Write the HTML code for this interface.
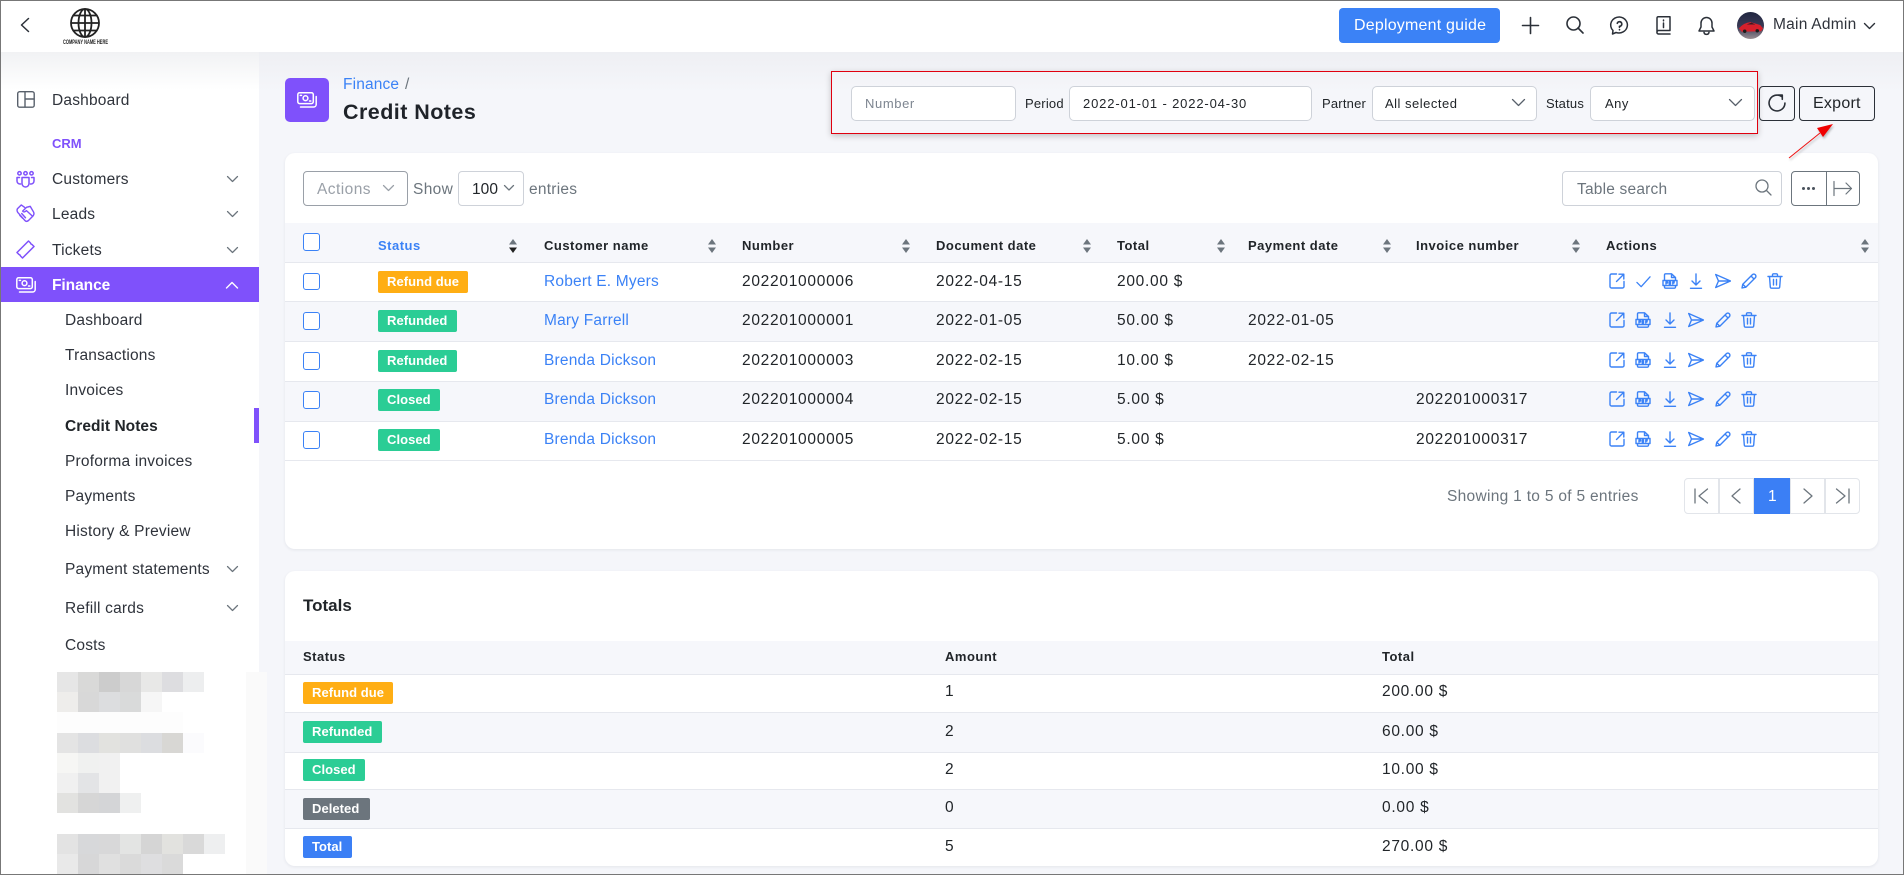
<!DOCTYPE html>
<html lang="en"><head><meta charset="utf-8"><title>Credit Notes</title>
<style>
*{box-sizing:border-box}
html,body{margin:0;padding:0}
body{width:1904px;height:875px;position:relative;overflow:hidden;background:#f5f6fa;font-family:"Liberation Sans",sans-serif;font-size:15.5px;color:#212529}
.a,.t,.b,svg.i{position:absolute}
.t{white-space:nowrap;line-height:20px;height:20px;letter-spacing:.2px;margin-top:2px}
.n{letter-spacing:.72px}
.h{font-size:13px;font-weight:700;letter-spacing:.5px;color:#212529;margin-top:0}
.l{color:#3b82f6}
.s{color:#2f333b}
.f{font-size:13px;letter-spacing:.2px;margin-top:1px}
.b{height:22px;line-height:22px;border-radius:2px;color:#fff;font-size:13px;font-weight:700;padding-left:9px;letter-spacing:.05px;white-space:nowrap}
.or{background:#ffae14}.gr{background:#2bcd95}.gy{background:#6c757d}.bl{background:#3b7ff5}
.inp{position:absolute;top:86px;height:35px;background:#fff;border:1px solid #ced2d9;border-radius:5px}
.row{position:absolute;left:285px;width:1593px;border-bottom:1px solid #e6e8ee}
.tint{background:#f6f7fb}
.so{position:absolute;width:8px;height:14px}
svg{overflow:visible}
svg.i{fill:none;stroke:#3b82f6;stroke-width:1.4;stroke-linecap:round;stroke-linejoin:round}
.pg{position:absolute;top:478px;width:35px;height:36px;border:1px solid #e2e5ea;background:#fff}
</style></head><body>
<svg width="0" height="0" style="position:absolute">
<defs>
<symbol id="ext" viewBox="0 0 16 16"><path d="M7.5 1H2.500A1.500 1.500 0 0 0 1 2.500V13.500A1.500 1.500 0 0 0 2.500 15H13.500A1.500 1.500 0 0 0 15 13.500V8.500M7.500 8.500L14.500 1.500M10 1.200H14.800V6"/></symbol>
<symbol id="chk" viewBox="0 0 16 16"><path d="M1 9L5.500 13.500L15 3"/></symbol>
<symbol id="pdf" viewBox="0 0 16 16"><path d="M2.500 7V2A1.200 1.200 0 0 1 3.700 .8H9.500L13.500 4.500V7M9.500 .8V4.500H13.500M1 7.500H15V12.500H1ZM2.500 12.500V14A1.200 1.200 0 0 0 3.700 15.200H12.300A1.200 1.200 0 0 0 13.500 14V12.500M4 9V11M4 9H5.500V10H4M7.200 9V11H8.500V9ZM10.800 9V11M10.800 9H12.300M10.800 10H12"/></symbol>
<symbol id="dl" viewBox="0 0 16 16"><path d="M8 1V12M4 8L8 12L12 8M2.500 15.300H13.500"/></symbol>
<symbol id="snd" viewBox="0 0 16 16"><path d="M.7 1.500L15.500 8L.7 14.500L3.500 8ZM3.500 8H15.500"/></symbol>
<symbol id="pen" viewBox="0 0 16 16"><path d="M1 15L1.800 11.200L11.300 1.700A1.800 1.800 0 0 1 14.300 4.700L4.800 14.200ZM10 3L13 6M1.800 11.200L4.800 14.200"/></symbol>
<symbol id="tr" viewBox="0 0 16 16"><path d="M1 3.500H15M5.500 3.500V1.800A1 1 0 0 1 6.500 .8H9.500A1 1 0 0 1 10.500 1.800V3.500M2.500 3.500L3.300 14A1.300 1.300 0 0 0 4.600 15.200H11.400A1.300 1.300 0 0 0 12.700 14L13.500 3.500M6.500 6.500V12M9.500 6.500V12"/></symbol>
<symbol id="cash" viewBox="0 0 20 16"><rect x=".8" y=".8" width="15.500" height="10.800" rx="1.800"/><circle cx="8.500" cy="6.200" r="2.400"/><path d="M3.300 3.400H4.500M12.500 9H13.800M19.200 4.500V12.500A2.500 2.500 0 0 1 16.700 15H3.500"/></symbol>
</defs></svg>

<!-- sidebar -->
<div class="a" style="left:0;top:52px;width:259px;height:823px;background:#fff"></div>
<div class="a" style="left:0;top:52px;width:259px;height:38px;background:linear-gradient(#f1f2f4,#fff)"></div>
<div class="a" style="left:259px;top:52px;width:1645px;height:40px;background:linear-gradient(#eeeff3,#f5f6fa)"></div>

<!-- header -->
<div class="a" style="left:0;top:0;width:1904px;height:52px;background:#fff"></div>
<svg class="i" style="left:20px;top:18px;stroke:#2b3038;stroke-width:1.500" width="10" height="14" viewBox="0 0 10 14"><path d="M8.500 .5L1.500 7L8.500 13.500"/></svg>
<svg class="a" style="left:70px;top:8px" width="30" height="30" viewBox="0 0 30 30" fill="none" stroke="#222" stroke-width="1.800"><circle cx="15" cy="15" r="14"/><ellipse cx="15" cy="15" rx="6.500" ry="14"/><path d="M15 1V29M1 15H29M3.500 7.500H26.500M3.500 22.500H26.500"/></svg>
<svg class="a" style="left:63px;top:38px" width="45" height="7"><text x="0" y="6" font-family="Liberation Sans" font-size="6" font-weight="700" fill="#222" textLength="45" lengthAdjust="spacingAndGlyphs">COMPANY NAME HERE</text></svg>

<div class="a" style="left:1339px;top:8px;width:161px;height:35px;border-radius:4px;background:#3b82f6"></div>
<div class="t" style="left:1354px;top:15px;color:#fff;font-size:16px;letter-spacing:.2px;margin-top:1px">Deployment guide</div>
<svg class="i" style="left:1522px;top:17px;stroke:#2b3038;stroke-width:1.600" width="17" height="17"><path d="M8.500 .5V16.500M.5 8.500H16.500"/></svg>
<svg class="i" style="left:1566px;top:16px;stroke:#2b3038;stroke-width:1.600" width="17" height="17"><circle cx="7.500" cy="7.500" r="6.500"/><path d="M12 12L17 17"/></svg>
<svg class="i" style="left:1610px;top:16px;stroke:#2b3038;stroke-width:1.500" width="19" height="19" viewBox="0 0 19 19"><path d="M9.500 1A8.500 8 0 1 1 6 16.500L2.500 18L3 14.500A8.500 8 0 0 1 9.500 1Z"/><path d="M7.300 7.300A2.300 2.300 0 1 1 9.500 10.300V11.300M9.500 13.600V13.800" stroke-width="1.700"/></svg>
<svg class="i" style="left:1656px;top:16px;stroke:#2b3038;stroke-width:1.500" width="15" height="19" viewBox="0 0 15 19"><path d="M1 16V2A1.300 1.300 0 0 1 2.300 .8H14V14.500H2.300A1.800 1.800 0 0 0 2.300 18H14M7.500 4V4.800M7.500 7V11.500" /></svg>
<svg class="i" style="left:1698px;top:16px;stroke:#2b3038;stroke-width:1.500" width="17" height="20" viewBox="0 0 17 20"><path d="M8.500 1.500A5.500 5.500 0 0 0 3 7V11L1 15H16L14 11V7A5.500 5.500 0 0 0 8.500 1.500ZM6 16.500A2.600 2.600 0 0 0 11 16.500"/></svg>
<svg class="a" style="left:1737px;top:12px" width="27" height="27" viewBox="0 0 28 28"><defs><clipPath id="cc"><circle cx="14" cy="14" r="14"/></clipPath><linearGradient id="ag" x1="0" y1="0" x2="0" y2="1"><stop offset="0" stop-color="#202640"/><stop offset=".55" stop-color="#3a3a55"/><stop offset="1" stop-color="#9a8e92"/></linearGradient></defs><g clip-path="url(#cc)"><rect width="28" height="28" fill="url(#ag)"/><path d="M2 17Q7 11 14 10.500L24 13.500L27 17L25 20L5 20.500Z" fill="#d6202c"/><path d="M10 13L15 11L19 13Z" fill="#3a1a22"/><circle cx="8" cy="20" r="1.800" fill="#1a1a1a"/><circle cx="21" cy="19.500" r="1.800" fill="#1a1a1a"/></g></svg>
<div class="t s" style="left:1773px;top:15px;letter-spacing:.25px;margin-top:0">Main Admin</div>
<svg class="i" style="left:1864px;top:23px;stroke:#2b3038" width="11" height="7"><path d="M.5 .5L5.500 5.500L10.500 .5"/></svg>

<!-- sidebar items -->
<svg class="i" style="left:17px;top:91px;stroke:#58606b" width="18" height="17" viewBox="0 0 18 17"><rect x=".7" y=".7" width="16.500" height="15.500" rx="2"/><path d="M8 .7V16M8 8H17"/></svg>
<div class="t s" style="left:52px;top:89px">Dashboard</div>
<div class="t" style="left:52px;top:134px;font-size:13px;font-weight:700;letter-spacing:0;color:#7f51fb;margin-top:0">CRM</div>
<svg class="i" style="left:16px;top:171px;stroke:#7f51fb;stroke-width:1.500" width="19" height="17" viewBox="0 0 19 17"><circle cx="3.500" cy="2.300" r="1.700"/><circle cx="9.500" cy="2.300" r="1.700"/><circle cx="15.500" cy="2.300" r="1.700"/><path d="M6 6.500H13V12.500A3.500 3.500 0 0 1 6 12.500ZM3.500 6.500H1V10A3 3 0 0 0 4.500 13M15.500 6.500H18V10A3 3 0 0 1 14.500 13"/></svg>
<div class="t s" style="left:52px;top:168px">Customers</div>
<svg class="i" style="left:16px;top:204px;stroke:#7f51fb;stroke-width:1.500" width="19" height="19" viewBox="0 0 20 20"><path d="M9 3.500L5.500 1L1.500 5Q.5 7 2 9L9.500 17.500Q11 19 13 17.500L18 12.500Q19.500 10.500 18.500 8.500L15 2.500L11 3.500L7 7.500Q8.500 9.500 11 7L17 12.500M4 12L7 15M6 10L10 14.500"/></svg>
<div class="t s" style="left:52px;top:203px">Leads</div>
<svg class="i" style="left:16px;top:240px;stroke:#7f51fb;stroke-width:1.500" width="19" height="19" viewBox="0 0 19 19"><path d="M1 12.500L12.500 1L14.500 3A2 2 0 0 0 16 4.500L18 6.500L6.500 18L4.500 16A2 2 0 0 0 3 14.500Z"/></svg>
<div class="t s" style="left:52px;top:239px">Tickets</div>
<svg class="i" style="left:227px;top:176px;stroke:#6c757d;stroke-width:1.250" width="11" height="6"><path d="M.5 .5L5.500 5.500L10.500 .5"/></svg>
<svg class="i" style="left:227px;top:211px;stroke:#6c757d;stroke-width:1.250" width="11" height="6"><path d="M.5 .5L5.500 5.500L10.500 .5"/></svg>
<svg class="i" style="left:227px;top:247px;stroke:#6c757d;stroke-width:1.250" width="11" height="6"><path d="M.5 .5L5.500 5.500L10.500 .5"/></svg>

<div class="a" style="left:1px;top:267px;width:258px;height:35px;background:#7f51fb"></div>
<svg class="i" style="left:16px;top:277px;stroke:#fff;stroke-width:1.500" width="20" height="16"><use href="#cash"/></svg>
<div class="t" style="left:52px;top:274px;color:#fff;font-weight:700;letter-spacing:-.05px">Finance</div>
<svg class="i" style="left:226px;top:282px;stroke:#fff" width="12" height="7"><path d="M.5 6L6 .5L11.500 6"/></svg>

<div class="t s" style="left:65px;top:309px">Dashboard</div>
<div class="t s" style="left:65px;top:344px">Transactions</div>
<div class="t s" style="left:65px;top:379px">Invoices</div>
<div class="t" style="left:65px;top:415px;font-weight:700;letter-spacing:.05px">Credit Notes</div>
<div class="a" style="left:254px;top:408px;width:5px;height:35px;background:#7f51fb"></div>
<div class="t s" style="left:65px;top:450px">Proforma invoices</div>
<div class="t s" style="left:65px;top:485px">Payments</div>
<div class="t s" style="left:65px;top:520px">History &amp; Preview</div>
<div class="t s" style="left:65px;top:558px">Payment statements</div>
<svg class="i" style="left:227px;top:566px;stroke:#6c757d;stroke-width:1.250" width="11" height="6"><path d="M.5 .5L5.500 5.500L10.500 .5"/></svg>
<div class="t s" style="left:65px;top:597px">Refill cards</div>
<svg class="i" style="left:227px;top:605px;stroke:#6c757d;stroke-width:1.250" width="11" height="6"><path d="M.5 .5L5.500 5.500L10.500 .5"/></svg>
<div class="t s" style="left:65px;top:634px">Costs</div>

<!-- pixelated block -->
<div class="a" style="left:246px;top:672px;width:21px;height:203px;background:#fafafa"></div>
<svg class="a" style="left:57px;top:672px" width="168" height="203" shape-rendering="crispEdges">
<g><rect x="0" y="0" width="21" height="20" fill="#e6e6e6"/><rect x="21" y="0" width="21" height="20" fill="#d9d9d8"/><rect x="42" y="0" width="21" height="20" fill="#cccccc"/><rect x="63" y="0" width="21" height="20" fill="#d7d7d7"/><rect x="84" y="0" width="21" height="20" fill="#e8e8e7"/><rect x="105" y="0" width="21" height="20" fill="#dddde0"/><rect x="126" y="0" width="21" height="20" fill="#edeeef"/>
<rect x="0" y="20" width="21" height="20" fill="#eeedeb"/><rect x="21" y="20" width="21" height="20" fill="#d8d8d8"/><rect x="42" y="20" width="21" height="20" fill="#dcdddf"/><rect x="63" y="20" width="21" height="20" fill="#d9dada"/><rect x="84" y="20" width="21" height="20" fill="#f6f6f6"/>
<rect x="0" y="40" width="126" height="21" fill="#fdfdfd"/>
<rect x="0" y="61" width="21" height="20" fill="#e4e4e4"/><rect x="21" y="61" width="21" height="20" fill="#dcdde0"/><rect x="42" y="61" width="21" height="20" fill="#e2e2df"/><rect x="63" y="61" width="21" height="20" fill="#e0e0df"/><rect x="84" y="61" width="21" height="20" fill="#dcdde0"/><rect x="105" y="61" width="21" height="20" fill="#d8d7d4"/><rect x="126" y="61" width="21" height="20" fill="#fbfbfd"/>
<rect x="0" y="81" width="21" height="20" fill="#f6f6f4"/><rect x="21" y="81" width="21" height="20" fill="#f0f1f0"/><rect x="42" y="81" width="21" height="20" fill="#f1f1f1"/>
<rect x="0" y="101" width="21" height="20" fill="#f0f0f0"/><rect x="21" y="101" width="21" height="20" fill="#e3e4e6"/><rect x="42" y="101" width="21" height="20" fill="#f1f1f1"/>
<rect x="0" y="121" width="21" height="20" fill="#e2e2e0"/><rect x="21" y="121" width="21" height="20" fill="#d6d6d6"/><rect x="42" y="121" width="21" height="20" fill="#d4d5d7"/><rect x="63" y="121" width="21" height="20" fill="#eff0f0"/>
<rect x="0" y="162" width="21" height="20" fill="#e3e3e3"/><rect x="21" y="162" width="21" height="20" fill="#d7d8da"/><rect x="42" y="162" width="21" height="20" fill="#d8d8d9"/><rect x="63" y="162" width="21" height="20" fill="#e3e4e3"/><rect x="84" y="162" width="21" height="20" fill="#d5d5d5"/><rect x="105" y="162" width="21" height="20" fill="#e2e2df"/><rect x="126" y="162" width="21" height="20" fill="#d9d9d9"/><rect x="147" y="162" width="21" height="20" fill="#eeeff0"/>
<rect x="0" y="182" width="21" height="20" fill="#e9e9e9"/><rect x="21" y="182" width="21" height="20" fill="#d7d7d8"/><rect x="42" y="182" width="21" height="20" fill="#e0e0e0"/><rect x="63" y="182" width="21" height="20" fill="#dadada"/><rect x="84" y="182" width="21" height="20" fill="#dedee0"/><rect x="105" y="182" width="21" height="20" fill="#dadada"/></g></svg>

<!-- page title -->
<div class="a" style="left:285px;top:78px;width:44px;height:44px;border-radius:5px;background:#7f51fb"></div>
<svg class="i" style="left:297px;top:92px;stroke:#fff;stroke-width:1.500" width="20" height="16"><use href="#cash"/></svg>
<div class="t l" style="left:343px;top:75px;letter-spacing:.15px;margin-top:0">Finance</div>
<div class="t" style="left:405px;top:75px;color:#6c757d;margin-top:0">/</div>
<div class="t" style="left:343px;top:99px;height:24px;line-height:24px;font-size:21.5px;font-weight:700;letter-spacing:.45px;color:#1f2329;margin-top:1px">Credit Notes</div>

<!-- filter -->
<div class="a" style="left:831px;top:71px;width:927px;height:63px;border:1.500px solid #e0000f;box-shadow:0 2px 6px rgba(0,0,0,.22)"></div>
<div class="inp" style="left:851px;width:165px"></div>
<div class="t f" style="left:865px;top:93px;color:#7d8590;letter-spacing:.6px">Number</div>
<div class="t f" style="left:1025px;top:93px">Period</div>
<div class="inp" style="left:1069px;width:243px"></div>
<div class="t f" style="left:1083px;top:93px;letter-spacing:.85px">2022-01-01 - 2022-04-30</div>
<div class="t f" style="left:1322px;top:93px">Partner</div>
<div class="inp" style="left:1372px;width:165px"></div>
<div class="t f" style="left:1385px;top:93px;letter-spacing:.5px">All selected</div>
<svg class="i" style="left:1512px;top:99px;stroke:#58606b;stroke-width:1.250" width="13" height="7"><path d="M.5 .5L6.500 6.500L12.500 .5"/></svg>
<div class="t f" style="left:1546px;top:93px">Status</div>
<div class="inp" style="left:1590px;width:165px"></div>
<div class="t f" style="left:1605px;top:93px;letter-spacing:.5px">Any</div>
<svg class="i" style="left:1729px;top:99px;stroke:#58606b;stroke-width:1.250" width="13" height="7"><path d="M.5 .5L6.500 6.500L12.500 .5"/></svg>
<div class="a" style="left:1759px;top:86px;width:36px;height:35px;border:1px solid #2b3038;border-radius:4px"></div>
<svg class="i" style="left:1768px;top:94px;stroke:#2b3038;stroke-width:1.500" width="18" height="18" viewBox="0 0 17 17"><path d="M13 2.500A7.500 7.500 0 1 0 16 8.500M9.500 1H13.500V5"/></svg>
<div class="a" style="left:1799px;top:86px;width:76px;height:35px;border:1px solid #2b3038;border-radius:4px"></div>
<div class="t" style="left:1813px;top:92px;font-size:16px;letter-spacing:.25px">Export</div>

<!-- card 1 -->
<div class="a" style="left:285px;top:153px;width:1593px;height:396px;background:#fff;border-radius:10px;box-shadow:0 1px 3px rgba(30,40,70,.08)"></div>
<svg class="a" style="left:1780px;top:115px;z-index:5;filter:drop-shadow(1px 2px 1px rgba(0,0,0,.25))" width="60" height="50"><path d="M9 43L40 18" stroke="#ee1111" stroke-width="1" fill="none"/><path d="M53 9L37 13L43 22Z" fill="#f00000"/></svg>
<div class="a" style="left:303px;top:171px;width:105px;height:35px;border:1px solid #9aa0a8;border-radius:4px"></div>
<div class="t" style="left:317px;top:178px;color:#9aa0a8;letter-spacing:.45px">Actions</div>
<svg class="i" style="left:383px;top:185px;stroke:#9aa0a8;stroke-width:1.250" width="11" height="6"><path d="M.5 .5L5.500 5.500L10.500 .5"/></svg>
<div class="t" style="left:413px;top:178px;color:#6c757d;letter-spacing:.35px">Show</div>
<div class="a" style="left:458px;top:171px;width:66px;height:35px;border:1px solid #ced2d9;border-radius:4px"></div>
<div class="t" style="left:472px;top:178px;letter-spacing:.05px">100</div>
<svg class="i" style="left:504px;top:185px;stroke:#6c757d;stroke-width:1.250" width="10" height="6"><path d="M.5 .5L5 5L9.500 .5"/></svg>
<div class="t" style="left:529px;top:178px;color:#6c757d;letter-spacing:.25px">entries</div>
<div class="a" style="left:1562px;top:171px;width:220px;height:35px;border:1px solid #ced2d9;border-radius:4px"></div>
<div class="t" style="left:1577px;top:178px;color:#6c757d">Table search</div>
<svg class="i" style="left:1755px;top:179px;stroke:#6c757d;stroke-width:1.300" width="17" height="17"><circle cx="7" cy="7" r="6"/><path d="M11.500 11.500L16 16"/></svg>
<div class="a" style="left:1791px;top:171px;width:69px;height:35px;border:1px solid #6c757d;border-radius:4px"></div>
<div class="a" style="left:1826px;top:171px;width:1px;height:35px;background:#6c757d"></div>
<div class="a" style="left:1802px;top:187px;width:3px;height:3px;border-radius:50%;background:#4a525c;box-shadow:5px 0 #4a525c,10px 0 #4a525c"></div>
<svg class="i" style="left:1833px;top:181px;stroke:#6c757d;stroke-width:1.200" width="20" height="15"><path d="M1 .5V14.500M1 7.500H18.500M13 2L18.500 7.500L13 13"/></svg>

<!-- table -->
<div class="row tint" style="top:223px;height:40px"></div>
<div class="row" style="top:263px;height:39px;background:#fff"></div>
<div class="row tint" style="top:302px;height:40px"></div>
<div class="row" style="top:342px;height:40px;background:#fff"></div>
<div class="row tint" style="top:382px;height:40px"></div>
<div class="row" style="top:422px;height:39px;background:#fff"></div>

<div class="a" style="left:303px;top:233px;width:17px;height:18px;border:1.300px solid #3b82f6;border-radius:3px;background:#fff"></div>
<div class="a" style="left:303px;top:273px;width:17px;height:17px;border:1.300px solid #3b82f6;border-radius:3px;background:#fff"></div>
<div class="a" style="left:303px;top:312px;width:17px;height:18px;border:1.300px solid #3b82f6;border-radius:3px;background:#fff"></div>
<div class="a" style="left:303px;top:352px;width:17px;height:18px;border:1.300px solid #3b82f6;border-radius:3px;background:#fff"></div>
<div class="a" style="left:303px;top:391px;width:17px;height:18px;border:1.300px solid #3b82f6;border-radius:3px;background:#fff"></div>
<div class="a" style="left:303px;top:431px;width:17px;height:18px;border:1.300px solid #3b82f6;border-radius:3px;background:#fff"></div>

<div class="t h" style="left:378px;top:236px;color:#3b82f6">Status</div>
<div class="t h" style="left:544px;top:236px">Customer name</div>
<div class="t h" style="left:742px;top:236px">Number</div>
<div class="t h" style="left:936px;top:236px">Document date</div>
<div class="t h" style="left:1117px;top:236px">Total</div>
<div class="t h" style="left:1248px;top:236px">Payment date</div>
<div class="t h" style="left:1416px;top:236px">Invoice number</div>
<div class="t h" style="left:1606px;top:236px">Actions</div>

<svg class="so" style="left:509px;top:239px" viewBox="0 0 8 14"><path d="M4 0L8 5.500H0Z" fill="#6c757d"/><path d="M4 14L8 8.500H0Z" fill="#222"/></svg>
<svg class="so" style="left:708px;top:239px" viewBox="0 0 8 14"><path d="M4 0L8 5.500H0Z M4 14L8 8.500H0Z" fill="#6c757d"/></svg>
<svg class="so" style="left:902px;top:239px" viewBox="0 0 8 14"><path d="M4 0L8 5.500H0Z M4 14L8 8.500H0Z" fill="#6c757d"/></svg>
<svg class="so" style="left:1083px;top:239px" viewBox="0 0 8 14"><path d="M4 0L8 5.500H0Z M4 14L8 8.500H0Z" fill="#6c757d"/></svg>
<svg class="so" style="left:1217px;top:239px" viewBox="0 0 8 14"><path d="M4 0L8 5.500H0Z M4 14L8 8.500H0Z" fill="#6c757d"/></svg>
<svg class="so" style="left:1383px;top:239px" viewBox="0 0 8 14"><path d="M4 0L8 5.500H0Z M4 14L8 8.500H0Z" fill="#6c757d"/></svg>
<svg class="so" style="left:1572px;top:239px" viewBox="0 0 8 14"><path d="M4 0L8 5.500H0Z M4 14L8 8.500H0Z" fill="#6c757d"/></svg>
<svg class="so" style="left:1861px;top:239px" viewBox="0 0 8 14"><path d="M4 0L8 5.500H0Z M4 14L8 8.500H0Z" fill="#6c757d"/></svg>

<!-- r1 -->
<div class="b or" style="left:378px;top:271px;width:90px">Refund due</div>
<div class="t l" style="left:544px;top:270px">Robert E. Myers</div>
<div class="t n" style="left:742px;top:270px">202201000006</div>
<div class="t n" style="left:936px;top:270px">2022-04-15</div>
<div class="t n" style="left:1117px;top:270px">200.00 $</div>
<!-- r2 -->
<div class="b gr" style="left:378px;top:310px;width:79px">Refunded</div>
<div class="t l" style="left:544px;top:309px">Mary Farrell</div>
<div class="t n" style="left:742px;top:309px">202201000001</div>
<div class="t n" style="left:936px;top:309px">2022-01-05</div>
<div class="t n" style="left:1117px;top:309px">50.00 $</div>
<div class="t n" style="left:1248px;top:309px">2022-01-05</div>
<!-- r3 -->
<div class="b gr" style="left:378px;top:350px;width:79px">Refunded</div>
<div class="t l" style="left:544px;top:349px">Brenda Dickson</div>
<div class="t n" style="left:742px;top:349px">202201000003</div>
<div class="t n" style="left:936px;top:349px">2022-02-15</div>
<div class="t n" style="left:1117px;top:349px">10.00 $</div>
<div class="t n" style="left:1248px;top:349px">2022-02-15</div>
<!-- r4 -->
<div class="b gr" style="left:378px;top:389px;width:62px">Closed</div>
<div class="t l" style="left:544px;top:388px">Brenda Dickson</div>
<div class="t n" style="left:742px;top:388px">202201000004</div>
<div class="t n" style="left:936px;top:388px">2022-02-15</div>
<div class="t n" style="left:1117px;top:388px">5.00 $</div>
<div class="t n" style="left:1416px;top:388px">202201000317</div>
<!-- r5 -->
<div class="b gr" style="left:378px;top:429px;width:62px">Closed</div>
<div class="t l" style="left:544px;top:428px">Brenda Dickson</div>
<div class="t n" style="left:742px;top:428px">202201000005</div>
<div class="t n" style="left:936px;top:428px">2022-02-15</div>
<div class="t n" style="left:1117px;top:428px">5.00 $</div>
<div class="t n" style="left:1416px;top:428px">202201000317</div>

<!-- action icons r1 -->
<svg class="i" style="left:1609px;top:273px" width="16" height="16"><use href="#ext"/></svg>
<svg class="i" style="left:1636px;top:274px" width="15" height="15"><use href="#chk"/></svg>
<svg class="i" style="left:1662px;top:273px" width="16" height="16"><use href="#pdf"/></svg>
<svg class="i" style="left:1688px;top:273px" width="16" height="16"><use href="#dl"/></svg>
<svg class="i" style="left:1715px;top:273px" width="16" height="16"><use href="#snd"/></svg>
<svg class="i" style="left:1741px;top:273px" width="16" height="16"><use href="#pen"/></svg>
<svg class="i" style="left:1767px;top:273px" width="16" height="16"><use href="#tr"/></svg>
<!-- r2 -->
<svg class="i" style="left:1609px;top:312px" width="16" height="16"><use href="#ext"/></svg>
<svg class="i" style="left:1635px;top:312px" width="16" height="16"><use href="#pdf"/></svg>
<svg class="i" style="left:1662px;top:312px" width="16" height="16"><use href="#dl"/></svg>
<svg class="i" style="left:1688px;top:312px" width="16" height="16"><use href="#snd"/></svg>
<svg class="i" style="left:1715px;top:312px" width="16" height="16"><use href="#pen"/></svg>
<svg class="i" style="left:1741px;top:312px" width="16" height="16"><use href="#tr"/></svg>
<!-- r3 -->
<svg class="i" style="left:1609px;top:352px" width="16" height="16"><use href="#ext"/></svg>
<svg class="i" style="left:1635px;top:352px" width="16" height="16"><use href="#pdf"/></svg>
<svg class="i" style="left:1662px;top:352px" width="16" height="16"><use href="#dl"/></svg>
<svg class="i" style="left:1688px;top:352px" width="16" height="16"><use href="#snd"/></svg>
<svg class="i" style="left:1715px;top:352px" width="16" height="16"><use href="#pen"/></svg>
<svg class="i" style="left:1741px;top:352px" width="16" height="16"><use href="#tr"/></svg>
<!-- r4 -->
<svg class="i" style="left:1609px;top:391px" width="16" height="16"><use href="#ext"/></svg>
<svg class="i" style="left:1635px;top:391px" width="16" height="16"><use href="#pdf"/></svg>
<svg class="i" style="left:1662px;top:391px" width="16" height="16"><use href="#dl"/></svg>
<svg class="i" style="left:1688px;top:391px" width="16" height="16"><use href="#snd"/></svg>
<svg class="i" style="left:1715px;top:391px" width="16" height="16"><use href="#pen"/></svg>
<svg class="i" style="left:1741px;top:391px" width="16" height="16"><use href="#tr"/></svg>
<!-- r5 -->
<svg class="i" style="left:1609px;top:431px" width="16" height="16"><use href="#ext"/></svg>
<svg class="i" style="left:1635px;top:431px" width="16" height="16"><use href="#pdf"/></svg>
<svg class="i" style="left:1662px;top:431px" width="16" height="16"><use href="#dl"/></svg>
<svg class="i" style="left:1688px;top:431px" width="16" height="16"><use href="#snd"/></svg>
<svg class="i" style="left:1715px;top:431px" width="16" height="16"><use href="#pen"/></svg>
<svg class="i" style="left:1741px;top:431px" width="16" height="16"><use href="#tr"/></svg>

<!-- pagination -->
<div class="t" style="left:1447px;top:485px;color:#6c757d;letter-spacing:.3px">Showing 1 to 5 of 5 entries</div>
<div class="pg" style="left:1684px;border-radius:4px 0 0 4px"></div>
<div class="pg" style="left:1719px"></div>
<div class="pg" style="left:1754px;width:36px;background:#3b7ff5;border-color:#3b7ff5"></div>
<div class="pg" style="left:1790px"></div>
<div class="pg" style="left:1825px;border-radius:0 4px 4px 0"></div>
<svg class="i" style="left:1694px;top:488px;stroke:#6c757d;stroke-width:1.300" width="16" height="16"><path d="M1 1V15M13.500 1L5 8L13.500 15"/></svg>
<svg class="i" style="left:1731px;top:488px;stroke:#6c757d;stroke-width:1.300" width="10" height="16"><path d="M9 1L1 8L9 15"/></svg>
<div class="t" style="left:1768px;top:485px;color:#fff;letter-spacing:0">1</div>
<svg class="i" style="left:1803px;top:488px;stroke:#6c757d;stroke-width:1.300" width="10" height="16"><path d="M1 1L9 8L1 15"/></svg>
<svg class="i" style="left:1835px;top:488px;stroke:#6c757d;stroke-width:1.300" width="16" height="16"><path d="M14 1V15M1.500 1L10 8L1.500 15"/></svg>

<!-- card 2 -->
<div class="a" style="left:285px;top:571px;width:1593px;height:295px;background:#fff;border-radius:10px;box-shadow:0 1px 3px rgba(30,40,70,.08)"></div>
<div class="t" style="left:303px;top:596px;font-size:17px;font-weight:700;letter-spacing:0;margin-top:0">Totals</div>
<div class="row tint" style="top:641px;height:34px"></div>
<div class="row" style="top:675px;height:38px;background:#fff"></div>
<div class="row tint" style="top:713px;height:40px"></div>
<div class="row" style="top:753px;height:37px;background:#fff"></div>
<div class="row tint" style="top:790px;height:39px"></div>
<div class="t h" style="left:303px;top:647px">Status</div>
<div class="t h" style="left:945px;top:647px">Amount</div>
<div class="t h" style="left:1382px;top:647px">Total</div>

<div class="b or" style="left:303px;top:682px;width:90px">Refund due</div>
<div class="b gr" style="left:303px;top:721px;width:79px">Refunded</div>
<div class="b gr" style="left:303px;top:759px;width:62px">Closed</div>
<div class="b gy" style="left:303px;top:798px;width:67px">Deleted</div>
<div class="b bl" style="left:303px;top:836px;width:49px">Total</div>
<div class="t n" style="left:945px;top:680px">1</div><div class="t n" style="left:1382px;top:680px">200.00 $</div>
<div class="t n" style="left:945px;top:720px">2</div><div class="t n" style="left:1382px;top:720px">60.00 $</div>
<div class="t n" style="left:945px;top:758px">2</div><div class="t n" style="left:1382px;top:758px">10.00 $</div>
<div class="t n" style="left:945px;top:796px">0</div><div class="t n" style="left:1382px;top:796px">0.00 $</div>
<div class="t n" style="left:945px;top:835px">5</div><div class="t n" style="left:1382px;top:835px">270.00 $</div>

<!-- screenshot frame -->
<div class="a" style="left:0;top:0;width:1904px;height:875px;border:1px solid #777;pointer-events:none"></div>
</body></html>
